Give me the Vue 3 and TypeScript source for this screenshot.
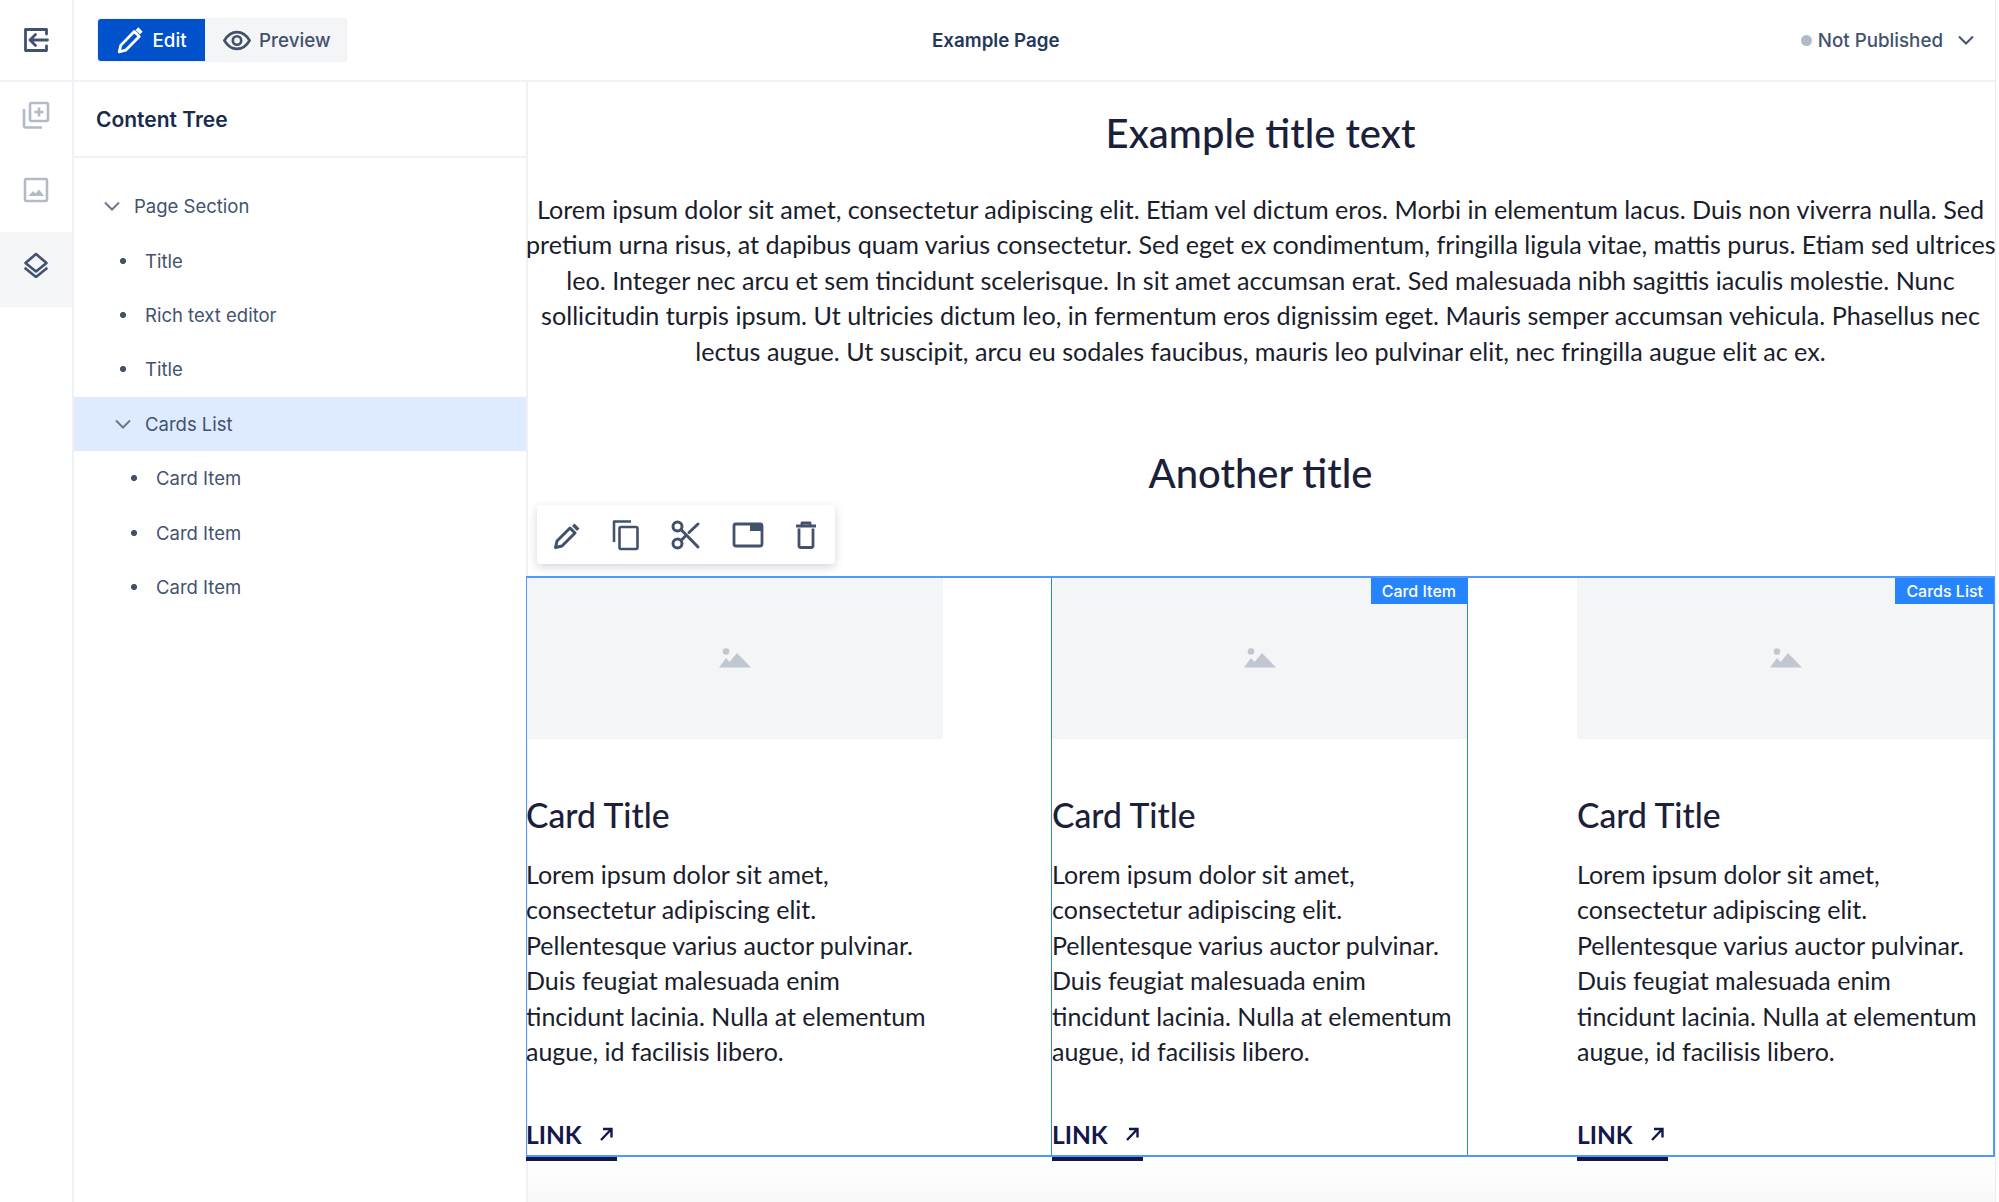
<script setup lang="ts">
const treeItems = [
  { label: 'Page Section', kind: 'toggle', depth: 0 },
  { label: 'Title', kind: 'leaf', depth: 1 },
  { label: 'Rich text editor', kind: 'leaf', depth: 1 },
  { label: 'Title', kind: 'leaf', depth: 1 },
  { label: 'Cards List', kind: 'toggle', depth: 1, active: true },
  { label: 'Card Item', kind: 'leaf', depth: 2 },
  { label: 'Card Item', kind: 'leaf', depth: 2 },
  { label: 'Card Item', kind: 'leaf', depth: 2 },
]

const introLines = [
  'Lorem ipsum dolor sit amet, consectetur adipiscing elit. Etiam vel dictum eros. Morbi in elementum lacus. Duis non viverra nulla. Sed',
  'pretium urna risus, at dapibus quam varius consectetur. Sed eget ex condimentum, fringilla ligula vitae, mattis purus. Etiam sed ultrices',
  'leo. Integer nec arcu et sem tincidunt scelerisque. In sit amet accumsan erat. Sed malesuada nibh sagittis iaculis molestie. Nunc',
  'sollicitudin turpis ipsum. Ut ultricies dictum leo, in fermentum eros dignissim eget. Mauris semper accumsan vehicula. Phasellus nec',
  'lectus augue. Ut suscipit, arcu eu sodales faucibus, mauris leo pulvinar elit, nec fringilla augue elit ac ex.',
]

const cardLines = [
  'Lorem ipsum dolor sit amet,',
  'consectetur adipiscing elit.',
  'Pellentesque varius auctor pulvinar.',
  'Duis feugiat malesuada enim',
  'tincidunt lacinia. Nulla at elementum',
  'augue, id facilisis libero.',
]

const cards = [1, 2, 3]
</script>

<template>
  <div class="app">
    <header class="topbar">
      <div class="rail-top">
        <svg width="26" height="26" viewBox="0 0 26 26" fill="none" stroke="#42526e" stroke-width="2.8" stroke-linejoin="round" stroke-linecap="round">
          <path d="M23.5 7V2.5H2.5v21h21V19" />
          <path d="M12.5 7.5 7 13l5.500 5.500M7 13h17.500" />
        </svg>
      </div>
      <div class="topbar-main">
        <div class="mode-switch">
          <button class="mode mode-on">
            <svg width="28" height="28" viewBox="0 0 26 26" fill="none" stroke="#fff" stroke-width="2.6" stroke-linejoin="round">
              <path d="M3 24l1.400-6L17 5.200l4.600 4.600L9 22.500 3 24z" />
              <path d="M19.500 2.500l4 4" stroke-width="3.600" />
            </svg>
            Edit
          </button>
          <button class="mode">
            <svg width="28" height="21" viewBox="0 0 30 22" fill="none" stroke="#42526e" stroke-width="2.800">
              <path d="M1.500 11C5 5 9.500 2 15 2s10 3 13.500 9c-3.500 6-8 9-13.500 9S5 17 1.500 11z" />
              <circle cx="15" cy="11" r="4.500" />
            </svg>
            Preview
          </button>
        </div>
        <div class="page-name">Example Page</div>
        <div class="status">
          <span class="status-dot"></span>
          Not Published
          <svg class="status-chev" width="18" height="12" viewBox="0 0 18 12" fill="none" stroke="#42526e" stroke-width="2"><path d="M2 2.500l7 7 7-7" /></svg>
        </div>
      </div>
    </header>

    <div class="body">
      <nav class="rail">
        <div class="rail-btn">
          <svg width="28" height="28" viewBox="0 0 28 28" fill="none" stroke="#b3bac7" stroke-width="2.600" stroke-linejoin="round">
            <rect x="8" y="2" width="18" height="18" rx="1.500" />
            <path d="M2 8v17a1.500 1.500 0 0 0 1.500 1.500H20" />
            <path d="M17 6.500v9M12.500 11h9" />
          </svg>
        </div>
        <div class="rail-btn">
          <svg width="26" height="26" viewBox="0 0 26 26" fill="none">
            <rect x="2" y="2" width="22" height="22" rx="1.500" stroke="#b3bac7" stroke-width="2.600" />
            <path d="M5.500 19l4.500-5 2.500 2.500 3.500-4 5 6.500z" fill="#b3bac7" />
          </svg>
        </div>
        <div class="rail-btn rail-btn-on">
          <svg width="26" height="26" viewBox="0 0 26 26" fill="none" stroke="#42526e" stroke-width="2.600" stroke-linejoin="round" stroke-linecap="round">
            <path d="M13 2 2.500 11 13 19.500 23.500 11z" />
            <path d="M2.500 16.500 13 25l10.500-8.500" />
          </svg>
        </div>
      </nav>

      <aside class="tree">
        <div class="tree-head">Content Tree</div>
        <ul class="tree-list">
          <li
            v-for="(item, i) in treeItems"
            :key="i"
            class="tree-row"
            :class="['depth-' + item.depth, { 'tree-row-on': item.active }]"
          >
            <svg v-if="item.kind === 'toggle'" class="tree-mark" width="18" height="12" viewBox="0 0 18 12" fill="none" stroke="#6b778c" stroke-width="2"><path d="M2 2.500l7 7 7-7" /></svg>
            <span v-else class="tree-mark tree-bullet"></span>
            {{ item.label }}
          </li>
        </ul>
      </aside>

      <main class="page">
        <h1 class="title">Example title text</h1>
        <p class="intro">
          <span v-for="line in introLines" :key="line" class="line">{{ line }}</span>
        </p>
        <h2 class="subtitle">Another title</h2>

        <div class="toolbar-row">
          <div class="toolbar">
            <svg width="28" height="28" viewBox="0 0 28 28" fill="#42526e">
              <path d="M2.500 26.500l1.500-6.500L17 7l5 5L9 25z" fill="none" stroke="#42526e" stroke-width="3" stroke-linejoin="round" />
              <path d="M19 5l2.500-2.500 5 5L24 10z" />
            </svg>
            <svg width="28" height="32" viewBox="0 0 28 32" fill="none" stroke="#42526e" stroke-width="2.600" stroke-linejoin="round">
              <path d="M2 23V2.500h17" />
              <rect x="7.500" y="8" width="18" height="22" rx="1.500" />
            </svg>
            <svg width="30" height="30" viewBox="0 0 30 30" fill="none" stroke="#42526e" stroke-width="3" stroke-linecap="round">
              <circle cx="6.500" cy="6.500" r="4.500" />
              <circle cx="6.500" cy="23.500" r="4.500" />
              <path d="M10 9.500 27 27M10 20.500 15 15.500M18 12.500 27 4" />
            </svg>
            <svg width="32" height="26" viewBox="0 0 32 26" fill="none">
              <rect x="2" y="2" width="28" height="22" rx="2" stroke="#42526e" stroke-width="2.800" />
              <path d="M18 2h12v7H18z" fill="#42526e" />
            </svg>
            <svg width="22" height="28" viewBox="0 0 22 28" fill="none" stroke="#42526e" stroke-width="2.800" stroke-linejoin="round">
              <path d="M4 7.500V25a1.500 1.500 0 0 0 1.500 1.500h11A1.500 1.500 0 0 0 18 25V7.500" />
              <path d="M1 5h20M7 3.500V1.800h8v1.700" />
            </svg>
          </div>
        </div>

        <section class="cards">
          <span class="tag tag-list">Cards List</span>
          <article v-for="card in cards" :key="card" class="card" :class="{ 'card-on': card === 2 }">
            <span v-if="card === 2" class="tag">Card Item</span>
            <div class="thumb">
              <svg width="32" height="20" viewBox="0 0 32 20" fill="#c1c7d0">
                <circle cx="7" cy="3.500" r="3.300" />
                <path d="M0 19.500 7 10l3.500 4L18 5l14 14.500z" />
              </svg>
            </div>
            <h3 class="card-title">Card Title</h3>
            <p class="card-text">
              <span v-for="line in cardLines" :key="line" class="line">{{ line }}</span>
            </p>
            <a class="link">
              LINK
              <svg width="16" height="16" viewBox="0 0 16 16" fill="none" stroke="#14174a" stroke-width="2.400"><path d="M3 14 13 3.500M5 3h8.500v8.500" /></svg>
            </a>
          </article>
        </section>
        <div class="page-fade"></div>
      </main>
    </div>
  </div>
</template>

<style>
html,
body {
  margin: 0;
  background: #fff;
}
</style>

<style scoped>
.app {
  width: 1996px;
  height: 1202px;
  box-sizing: border-box;
  overflow: hidden;
  display: flex;
  flex-direction: column;
  font-family: Inter, 'Liberation Sans', sans-serif;
  color: #42526e;
  background: #fff;
  border-right: 1px solid #eceef1;
}

.topbar {
  display: flex;
  height: 82px;
  box-sizing: border-box;
  flex: none;
  border-bottom: 2px solid #f0f1f6;
}

.rail-top {
  width: 74px;
  flex: none;
  display: flex;
  align-items: center;
  justify-content: center;
  box-sizing: border-box;
  border-right: 2px solid #f0f1f6;
}

.topbar-main {
  flex: 1;
  display: flex;
  align-items: center;
  padding: 0 20px 0 23px;
}

.mode-switch {
  display: flex;
  width: 250px;
  height: 44px;
  background: #f4f5f7;
  border-radius: 3px;
  border: 1px solid #eef0f3;
  box-sizing: border-box;
}

.mode {
  display: flex;
  align-items: center;
  gap: 8px;
  border: 0;
  padding: 0 0 0 18px;
  background: transparent;
  font: 500 18.800px Inter, sans-serif;
  color: #42526e;
}

.mode-on {
  width: 107px;
  flex: none;
  gap: 8.500px;
  padding: 0 0 0 18px;
  background: #0052cc;
  color: #fff;
  border-radius: 3px 0 0 3px;
}

.page-name {
  margin-left: 585px;
  font-size: 18.750px;
  font-weight: 600;
  color: #253858;
}

.status {
  margin-left: auto;
  display: flex;
  align-items: center;
  font-size: 18.750px;
  font-weight: 500;
}

.status-dot {
  width: 11px;
  height: 11px;
  border-radius: 50%;
  background: #b3bac7;
  margin-right: 6px;
}

.status-chev {
  margin-left: 14px;
}

.body {
  flex: 1;
  display: flex;
  min-height: 0;
}

.rail {
  width: 74px;
  flex: none;
  box-sizing: border-box;
  border-right: 2px solid #f0f1f6;
}

.rail-btn {
  height: 75px;
  box-sizing: border-box;
  padding-bottom: 9px;
  display: flex;
  align-items: center;
  justify-content: center;
}

.rail-btn-on {
  background: #f4f5f7;
}

.tree {
  width: 454px;
  flex: none;
  box-sizing: border-box;
  border-right: 2px solid #f0f1f6;
}

.tree-head {
  height: 76px;
  box-sizing: border-box;
  border-bottom: 2px solid #f0f1f6;
  padding: 0 0 0 22px;
  display: flex;
  align-items: center;
  font-size: 21px;
  font-weight: 600;
  color: #172b4d;
}

.tree-list {
  list-style: none;
  margin: 0;
  padding: 21px 0 0;
}

.tree-row {
  height: 54.400px;
  display: flex;
  align-items: center;
  font-size: 18.500px;
  color: #42526e;
}

.tree-mark {
  flex: none;
  margin-right: 13px;
}

.depth-0 {
  padding-left: 29px;
}

.depth-1 {
  padding-left: 40px;
}

.depth-2 {
  padding-left: 51px;
}

.tree-bullet {
  width: 18px;
  height: 6px;
  background: radial-gradient(circle, #42526e 2.800px, transparent 3.200px);
}

.tree-row-on {
  background: #deebff;
}

.page {
  position: relative;
  flex: 1;
  min-width: 0;
  margin-left: -2px;
  display: flex;
  flex-direction: column;
  color: #1a1d2b;
  font-family: Lato, sans-serif;
}

.page > * {
  flex: none;
}

.title,
.subtitle {
  margin: 0;
  text-align: center;
  font-size: 40px;
  font-weight: 500;
  line-height: 56px;
  color: #1c1f3a;
}

.title {
  margin-top: 23px;
}

.intro {
  margin: 31px 0 0;
  font-size: 25.150px;
  line-height: 35.400px;
  text-align: center;
}

.line {
  display: block;
  white-space: nowrap;
}

.subtitle {
  margin-top: 76px;
}

.toolbar-row {
  height: 75px;
  display: flex;
  align-items: flex-start;
}

.toolbar {
  position: relative;
  z-index: 2;
  margin: 4px 0 0 11px;
  width: 298px;
  height: 59px;
  box-sizing: border-box;
  padding: 0 18px 0 16px;
  display: flex;
  align-items: center;
  justify-content: space-between;
  background: #fff;
  border-radius: 4px;
  box-shadow: 0 3px 10px rgba(9, 30, 66, 0.18);
}

.cards {
  position: relative;
  height: 581px;
  display: flex;
}

.cards::after {
  content: '';
  position: absolute;
  inset: 0;
  border: 2px solid #4c9aff;
  border-left-width: 1.500px;
  pointer-events: none;
  z-index: 1;
}

.card {
  position: relative;
  width: 417px;
  flex: none;
  display: flex;
  flex-direction: column;
}

.card > * {
  flex: none;
}

.card-on {
  width: 415px;
  margin: 0 110px 0 109px;
  box-shadow: 1px 0 0 #2684ff, -1px 0 0 #2684ff;
}

.card:last-child {
  width: 418px;
}

.tag {
  position: absolute;
  top: 2px;
  right: 0;
  z-index: 2;
  height: 26px;
  padding: 0 11px;
  display: flex;
  align-items: center;
  background: #2684ff;
  color: #fff;
  font: 500 16px Inter, sans-serif;
}

.tag-list {
  right: 1px;
}

.thumb {
  height: 161px;
  box-sizing: border-box;
  padding-bottom: 2px;
  margin-top: 2px;
  display: flex;
  align-items: center;
  justify-content: center;
  background: #f4f5f7;
}

.card-title {
  margin: 53px 0 0;
  font-size: 33.700px;
  font-weight: 500;
  line-height: 46px;
  color: #1c1f3a;
}

.card-text {
  margin: 19px 0 0;
  font-size: 25px;
  line-height: 35.400px;
}

.link {
  position: relative;
  z-index: 2;
  align-self: flex-start;
  display: flex;
  align-items: center;
  gap: 16px;
  width: 91px;
  height: 46px;
  margin-top: 42px;
  font-size: 24.500px;
  font-weight: 700;
  color: #14174a;
  border-bottom: 4px solid #14174a;
}

.page-fade {
  position: absolute;
  left: 2px;
  right: 0;
  bottom: 0;
  height: 40px;
  background: linear-gradient(#fff, #f8f8f8);
}
</style>
